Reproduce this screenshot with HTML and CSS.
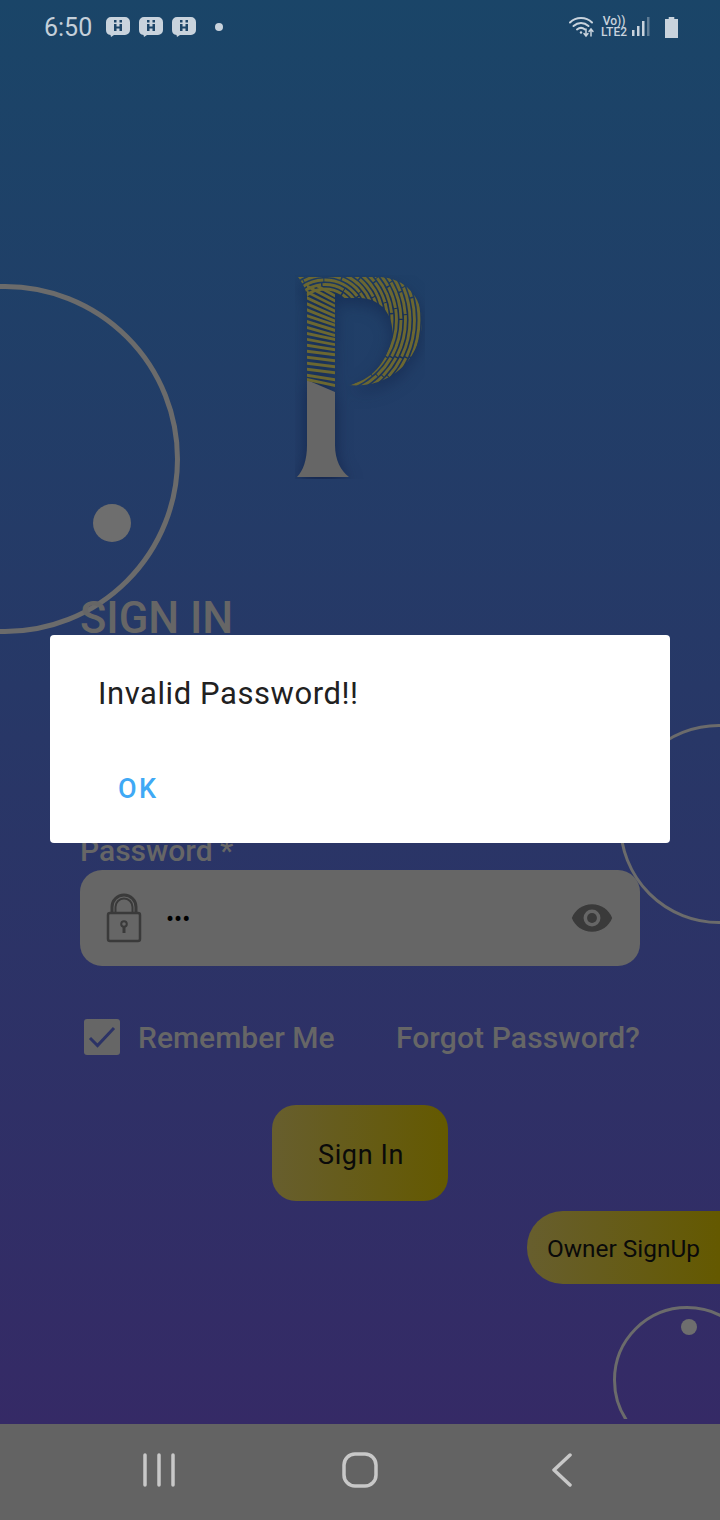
FILE: index.html
```html
<!DOCTYPE html>
<html lang="en">
<head>
  <meta charset="UTF-8">
  <title>Sign In</title>
  <link rel="stylesheet" href="styles.css">
</head>
<body>
  <svg class="defs" width="0" height="0">
    <symbol id="bubble" viewBox="0 0 24 20">
      <path d="M5 0h14a5 5 0 0 1 5 5v8a5 5 0 0 1-5 5H8l-3 2-.5-2A5 5 0 0 1 0 13V5a5 5 0 0 1 5-5z" fill="#c9d3dd"/>
      <path d="M8 3h2.500v2.500H8zM13.500 3H16v2.500h-2.500zM8 7h2.500v2.500h3V7H16v7h-2.500v-2.500h-3V14H8z" fill="#1d4568"/>
    </symbol>
  </svg>

  <div class="screen">
    <div class="app">
      <!-- background circles -->
      <div class="decor">
        <div class="ring ring-left"></div>
        <div class="spot spot-left"></div>
        <div class="ring ring-right"></div>
        <div class="ring ring-bottom"></div>
        <div class="spot spot-bottom"></div>
      </div>

      <div class="statusbar">
        <div class="status-left">
          <span class="clock">6:50</span>
          <svg class="bubble"><use href="#bubble"/></svg>
          <svg class="bubble"><use href="#bubble"/></svg>
          <svg class="bubble"><use href="#bubble"/></svg>
          <span class="status-dot"></span>
        </div>
        <div class="status-right">
          <svg class="wifi" width="26" height="22" viewBox="0 0 26 22" fill="none" stroke="#c9d3dd" stroke-width="2" stroke-linecap="round">
            <path d="M1 6.500C7 .5 17 .5 23 6.500"/>
            <path d="M4.500 10c4.500-4 10.500-4 15 0"/>
            <path d="M8 13.500c2.500-2 5.500-2 8 0"/>
            <circle cx="12" cy="16.500" r="1.200" fill="#c9d3dd" stroke="none"/>
            <path d="M17 13v6M15 17.500l2 2.500 2-2.500M22 20v-6M20 15.500l2-2.500 2 2.500" stroke-width="1.500"/>
          </svg>
          <div class="volte"><span>Vo))</span><span>LTE2</span></div>
          <svg class="signal" width="18" height="20" viewBox="0 0 18 20">
            <rect x="0" y="13" width="2.500" height="6" fill="#c9d3dd"/>
            <rect x="5" y="9" width="2.500" height="10" fill="#c9d3dd"/>
            <rect x="10" y="4" width="2.500" height="15" fill="#c9d3dd"/>
            <rect x="15" y="0" width="2.500" height="19" fill="#5f7c95"/>
          </svg>
          <svg class="battery" width="13" height="21" viewBox="0 0 14 21" preserveAspectRatio="none">
            <path d="M4 0h6v2h4v19H0V2h4z" fill="#c9d3dd"/>
          </svg>
        </div>
      </div>

      <div class="content">
        <div class="logo">
          <svg width="130" height="204" viewBox="0 0 130 204">
            <defs>
              <clipPath id="bowlClip">
                <path d="M3 2H85C110 3 127 22 127 46C127 80 98 115 53 110C76 106 92 88 97 62C100 40 85 23 65 23H40V22H12V20C10 12 6 6 3 2Z"/>
              </clipPath>
              <clipPath id="stemClip">
                <path d="M12 10H40V118L12 106Z"/>
              </clipPath>
            </defs>
            <g class="logo-art">
              <path d="M12 105L40 117V170C40 185 46 196 54 202H2C8 196 12 185 12 170Z" fill="#666"/>
              <g clip-path="url(#bowlClip)" fill="none" stroke="#6b6731" stroke-width="2.900" stroke-dasharray="38 1.500 22 1">
                <circle cx="30" cy="45" r="31"/>
                <circle cx="30" cy="45" r="35.500"/>
                <circle cx="30" cy="45" r="40"/>
                <circle cx="30" cy="45" r="44.500"/>
                <circle cx="30" cy="45" r="49"/>
                <circle cx="30" cy="45" r="53.500"/>
                <circle cx="30" cy="45" r="58"/>
                <circle cx="30" cy="45" r="62.500"/>
                <circle cx="30" cy="45" r="67"/>
                <circle cx="30" cy="45" r="71.500"/>
                <circle cx="30" cy="45" r="76"/>
                <circle cx="30" cy="45" r="80.500"/>
                <circle cx="30" cy="45" r="85"/>
                <circle cx="30" cy="45" r="89.500"/>
                <circle cx="30" cy="45" r="94"/>
                <circle cx="30" cy="45" r="98.500"/>
              </g>
              <g clip-path="url(#stemClip)" fill="none" stroke="#6b6731" stroke-width="2.900">
                <path d="M10 4L42 22M10 10L42 27M10 16L42 32M10 22L42 37M10 28L42 42M10 34L42 47M10 40L42 51M10 46L42 56M10 52L42 61M10 58L42 65M10 64L42 70M10 70L42 75M10 76L42 80M10 82L42 86M10 88L42 92M10 94L42 98M10 100L42 105M10 104L42 111"/>
              </g>
            </g>
          </svg>
        </div>

        <h1 class="title">SIGN IN</h1>
        <div class="field-label">Password *</div>
        <div class="input-box">
          <svg class="lock" width="36" height="50" viewBox="0 0 36 50" fill="none" stroke="#3a3a3a">
            <path d="M6 20V14a12 12 0 0 1 24 0v6" stroke-width="3"/>
            <path d="M9.500 20V14a8.500 8.500 0 0 1 17 0v6" stroke-width="2"/>
            <rect x="2" y="20" width="32" height="28" rx="2" stroke-width="2.500"/>
            <circle cx="18" cy="31" r="2.800" stroke-width="2"/>
            <path d="M18 34v6" stroke-width="3"/>
          </svg>
          <span class="dots">•••</span>
          <svg class="eye" width="44" height="30" viewBox="0 0 24 16">
            <path d="M12 .5C7 .5 2.700 3.600 1 8c1.700 4.400 6 7.500 11 7.500S21.300 12.400 23 8C21.300 3.600 17 .5 12 .5z" fill="#3a3a3a"/>
            <circle cx="12" cy="8" r="4.600" fill="#666"/>
            <circle cx="12" cy="8" r="2.700" fill="#3a3a3a"/>
          </svg>
        </div>

        <div class="options">
          <label class="remember">
            <span class="checkbox">
              <svg width="36" height="36" viewBox="0 0 36 36" fill="none" stroke="#2c3366" stroke-width="3"><path d="M6 19l7.500 7.500L30 9"/></svg>
            </span>
            Remember Me
          </label>
          <span class="forgot">Forgot Password?</span>
        </div>

        <div class="signin-row"><button class="btn-signin">Sign In</button></div>
        <div class="owner-row"><button class="btn-owner">Owner SignUp</button></div>
      </div>
    </div>

    <div class="navbar">
      <svg width="32" height="34" viewBox="0 0 32 34" stroke="#c8c8c8" stroke-width="3.500" stroke-linecap="round"><path d="M2 2V32M16 2V32M30 2V32"/></svg>
      <svg class="nav-home" width="36" height="36" viewBox="0 0 36 36" fill="none" stroke="#c8c8c8" stroke-width="3.500"><rect x="2" y="2" width="32" height="32" rx="11"/></svg>
      <svg class="nav-back" width="22" height="34" viewBox="0 0 22 34" fill="none" stroke="#c8c8c8" stroke-width="3.500" stroke-linecap="round" stroke-linejoin="round"><path d="M19 2L3 17L19 32"/></svg>
    </div>

    <!-- alert dialog -->
    <div class="dialog">
      <p class="dialog-text">Invalid Password!!</p>
      <span class="dialog-ok">OK</span>
    </div>
  </div>
</body>
</html>
```

FILE: styles.css
```css
body {
  margin: 0;
  font-family: Roboto, "Liberation Sans", sans-serif;
}

.defs {
  position: absolute;
}

.screen {
  position: relative;
  width: 720px;
  height: 1520px;
  overflow: hidden;
  display: flex;
  flex-direction: column;
}

.app {
  position: relative;
  flex: 1;
  background: linear-gradient(180deg, #1a4568 0%, #352a66 100%);
}

/* circles behind the form */
.decor {
  position: absolute;
  top: 0;
  left: 0;
  right: 0;
  height: 1419px;
  overflow: hidden;
}

.ring {
  position: absolute;
  box-sizing: border-box;
  border-radius: 50%;
  border: 3px solid #6b6b6b;
}

.ring-left {
  left: -170px;
  top: 284px;
  width: 350px;
  height: 350px;
  border-width: 5px;
}

.ring-right {
  left: 619px;
  top: 724px;
  width: 200px;
  height: 200px;
}

.ring-bottom {
  left: 613px;
  top: 1306px;
  width: 148px;
  height: 148px;
}

.spot {
  position: absolute;
  border-radius: 50%;
  background-color: #6e6e6e;
}

.spot-left {
  left: 93px;
  top: 504px;
  width: 38px;
  height: 38px;
}

.spot-bottom {
  left: 681px;
  top: 1319px;
  width: 16px;
  height: 16px;
}

/* status bar */
.statusbar {
  position: relative;
  height: 54px;
  display: flex;
  justify-content: space-between;
  align-items: center;
  padding: 0 42px 0 44px;
}

.status-left,
.status-right {
  display: flex;
  align-items: center;
}

.clock {
  font-size: 25px;
  color: #c5d0da;
  margin-right: 14px;
}

.bubble {
  width: 24px;
  height: 20px;
  margin-right: 9px;
}

.status-dot {
  width: 8px;
  height: 8px;
  border-radius: 50%;
  background-color: #c9d3dd;
  margin-left: 10px;
}

.wifi {
  margin-right: 6px;
}

.volte {
  display: flex;
  flex-direction: column;
  align-items: center;
  font-size: 12px;
  font-weight: 500;
  line-height: 11px;
  color: #c9d3dd;
  margin-right: 5px;
}

.signal {
  margin-right: 15px;
}

/* form */
.content {
  position: relative;
  padding-left: 80px;
}

.logo {
  display: flex;
  padding: 221px 0 0 215px;
}

.logo-art {
  filter: drop-shadow(0 6px 8px rgba(12, 24, 60, 0.65));
}

.title {
  margin: 116px 0 0;
  font-size: 43.500px;
  line-height: 48px;
  font-weight: 500;
  color: #666;
}

.field-label {
  margin-top: 191px;
  font-size: 30px;
  line-height: 34px;
  font-weight: 500;
  color: #666;
}

.input-box {
  width: 560px;
  height: 96px;
  margin-top: 2px;
  box-sizing: border-box;
  display: flex;
  align-items: center;
  padding: 0 26px 0 26px;
  background-color: #666;
  border-radius: 22px;
}

.dots {
  flex: 1;
  margin-left: 24px;
  padding-top: 2px;
  font-size: 24px;
  color: #000;
}

.options {
  width: 560px;
  margin-top: 53px;
  display: flex;
  justify-content: space-between;
  align-items: center;
  font-size: 30px;
  font-weight: 500;
  color: #666;
}

.remember {
  display: flex;
  align-items: center;
  gap: 18px;
  padding-left: 4px;
}

.forgot {
  letter-spacing: 0.120px;
}

.checkbox {
  display: block;
  width: 36px;
  height: 36px;
  background-color: #666;
  border-radius: 3px;
}

.signin-row {
  display: flex;
  justify-content: center;
  width: 560px;
  margin-top: 50px;
}

.btn-signin {
  width: 176px;
  height: 96px;
  padding: 4px 0 0 2px;
  border: none;
  border-radius: 24px;
  background: linear-gradient(90deg, #675e2e 0%, #645900 100%);
  font-family: inherit;
  font-size: 27px;
  letter-spacing: 0.6px;
  color: #0a0a0a;
}

.owner-row {
  display: flex;
  justify-content: flex-end;
  margin-top: 10px;
}

.btn-owner {
  width: 193px;
  height: 73px;
  padding: 2px 0 0 20px;
  text-align: left;
  border: none;
  border-radius: 36px 0 0 36px;
  background: linear-gradient(90deg, #675e2e 0%, #645900 100%);
  font-family: inherit;
  font-size: 24.400px;
  color: #0a0a0a;
}

/* bottom navigation */
.navbar {
  height: 96px;
  box-sizing: border-box;
  flex-shrink: 0;
  display: flex;
  align-items: center;
  padding: 0 0 4px 143px;
  background-color: #636363;
}

.nav-home {
  margin-left: 167px;
}

.nav-back {
  margin-left: 173px;
}

/* dialog */
.dialog {
  position: absolute;
  left: 50px;
  top: 635px;
  width: 620px;
  height: 208px;
  box-sizing: border-box;
  padding: 40px 48px 0;
  background-color: #fff;
  border-radius: 4px;
}

.dialog-text {
  margin: 0;
  font-size: 31px;
  line-height: 38px;
  letter-spacing: 0.570px;
  color: #212121;
}

.dialog-ok {
  display: block;
  margin: 57px 0 0 20px;
  font-size: 27px;
  line-height: 38px;
  font-weight: 500;
  letter-spacing: 2.500px;
  color: #3fa9f5;
}
```
